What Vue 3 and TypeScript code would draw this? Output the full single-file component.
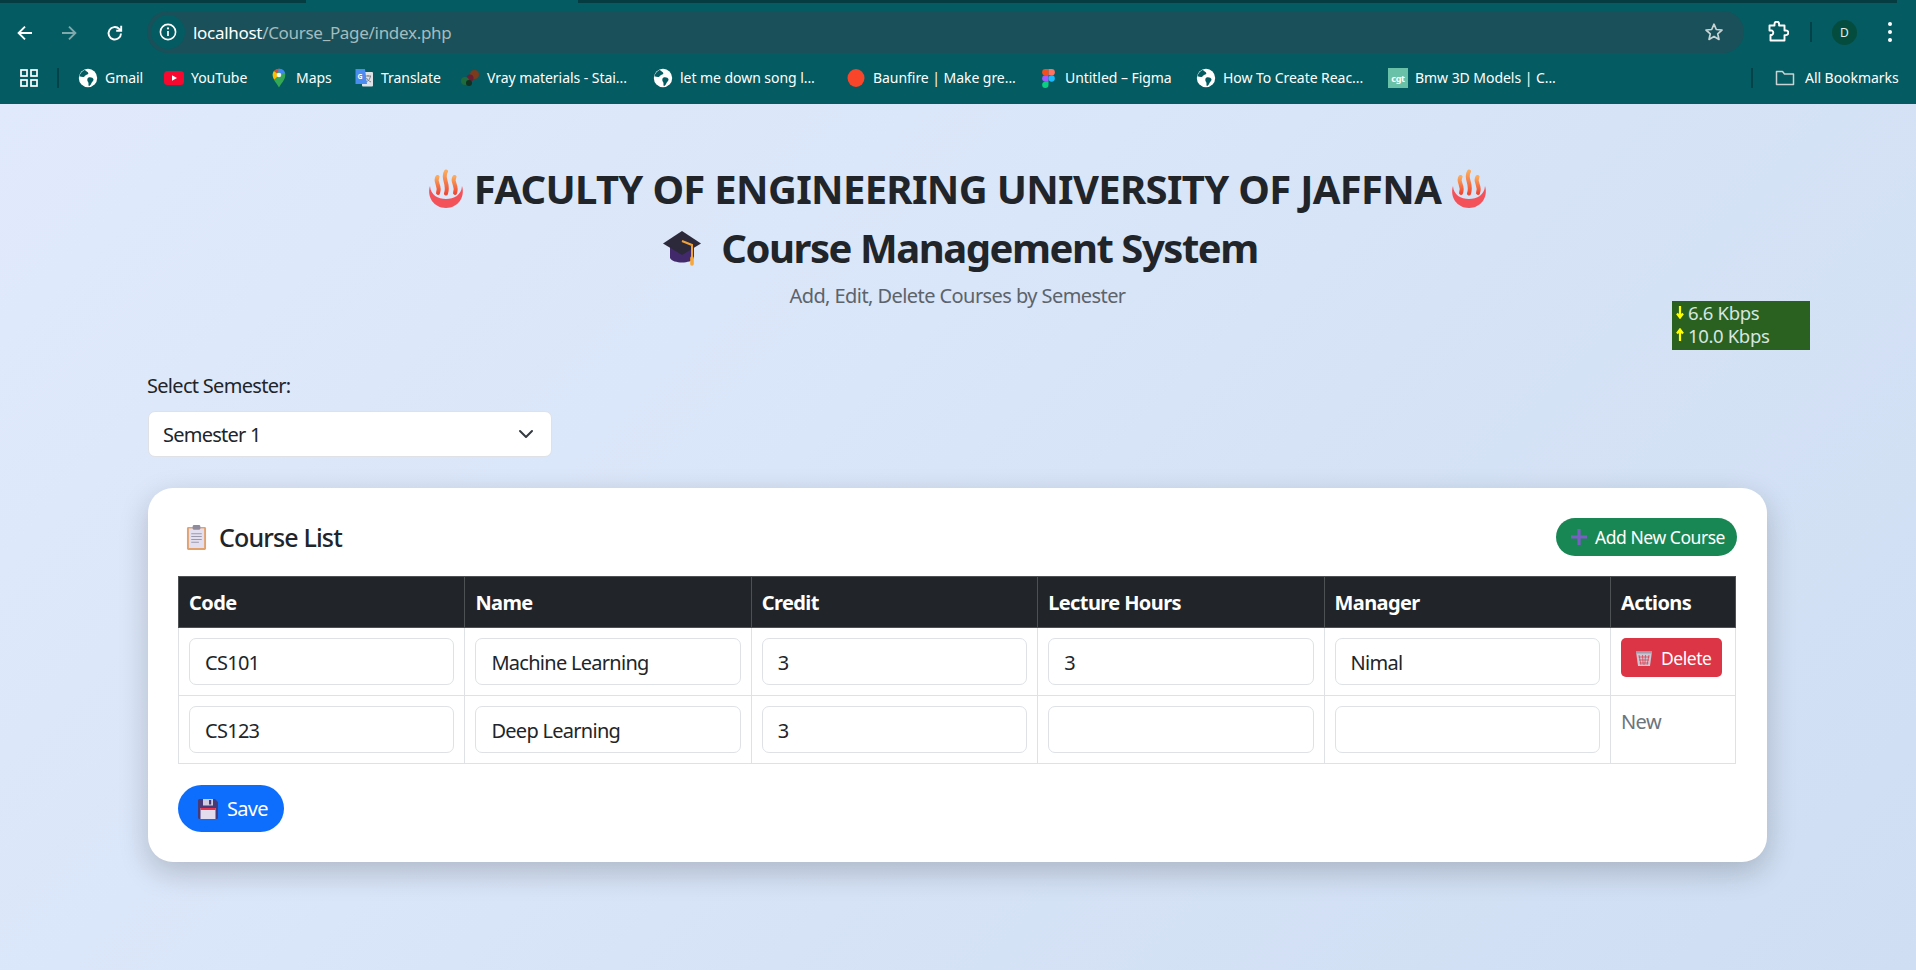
<script setup lang="ts">
import { ref } from 'vue'

interface Mark { label: string; kind: string; width: number }

const bookmarks: Mark[] = [
  { label: 'Gmail', kind: 'globe', width: 86 },
  { label: 'YouTube', kind: 'yt', width: 105 },
  { label: 'Maps', kind: 'maps', width: 85 },
  { label: 'Translate', kind: 'translate', width: 106 },
  { label: 'Vray materials - Stai...', kind: 'vray', width: 193 },
  { label: 'let me down song l...', kind: 'globe', width: 193 },
  { label: 'Baunfire | Make gre...', kind: 'baun', width: 192 },
  { label: 'Untitled – Figma', kind: 'figma', width: 158 },
  { label: 'How To Create Reac...', kind: 'globe', width: 192 },
  { label: 'Bmw 3D Models | C...', kind: 'cgt', width: 168 }
]

const semester = ref('Semester 1')
const columns = ['Code', 'Name', 'Credit', 'Lecture Hours', 'Manager', 'Actions']
const rows = ref([
  { code: 'CS101', name: 'Machine Learning', credit: '3', hours: '3', manager: 'Nimal', isNew: false },
  { code: 'CS123', name: 'Deep Learning', credit: '3', hours: '', manager: '', isNew: true }
])
</script>

<template>
  <div class="window">
    <header class="chrome">
      <div class="tabstrip">
        <span class="strip left"></span>
        <span class="strip right"></span>
      </div>
      <div class="toolbar">
        <svg class="nav" viewBox="0 0 20 20" width="20" height="20"><path d="M17 10H4M10 3.6 3.6 10l6.4 6.4" fill="none" stroke="#fff" stroke-width="1.9"/></svg>
        <svg class="nav dim" viewBox="0 0 20 20" width="20" height="20"><path d="M3 10h13M10 3.6l6.4 6.4-6.4 6.4" fill="none" stroke="#7fa9ac" stroke-width="1.9"/></svg>
        <svg class="nav" viewBox="0 0 20 20" width="20" height="20"><path d="M16 10.5a6.2 6.2 0 1 1-1.8-4.6L16 7.6M16.2 2.8v5h-5" fill="none" stroke="#fff" stroke-width="1.9"/></svg>
        <div class="omnibox">
          <span class="info">
            <svg viewBox="0 0 20 20" width="20" height="20"><circle cx="10" cy="10" r="7.6" fill="none" stroke="#fff" stroke-width="1.6"/><path d="M10 9v5" stroke="#fff" stroke-width="1.7"/><circle cx="10" cy="6.4" r="1.1" fill="#fff"/></svg>
          </span>
          <span class="url"><b>localhost</b>/Course_Page/index.php</span>
          <svg class="star" viewBox="0 0 20 20" width="20" height="20"><path d="m10 2.2 2.3 5.3 5.7.5-4.3 3.8 1.3 5.6-5-3-5 3 1.3-5.6L2 8l5.7-.5z" fill="none" stroke="#c7d3d4" stroke-width="1.7" stroke-linejoin="round"/></svg>
        </div>
        <svg class="ext" viewBox="0 0 22 22" width="22" height="22"><path d="M2.5 4.5h5V3a2.3 2.3 0 0 1 4.6 0v1.500h5.400v5H19a2.300 2.300 0 0 1 0 4.600h-1.500v5.400H3.500v-5.500H5a2.600 2.600 0 0 0 0-4.500H2.500z" fill="none" stroke="#fff" stroke-width="1.9" stroke-linejoin="round"/></svg>
        <span class="vsep tall"></span>
        <span class="avatar">D</span>
        <span class="kebab"><i></i><i></i><i></i></span>
      </div>
      <div class="bookmarks">
        <svg class="apps" viewBox="0 0 18 18" width="18" height="18"><g fill="none" stroke="#fff" stroke-width="1.7"><rect x="1" y="1" width="6" height="6"/><rect x="11" y="1" width="6" height="6"/><rect x="1" y="11" width="6" height="6"/><rect x="11" y="11" width="6" height="6"/></g></svg>
        <span class="vsep first"></span>
        <div v-for="b in bookmarks" :key="b.label" class="mark" :style="{ width: b.width + 'px' }">
          <span class="fav">
            <svg v-if="b.kind === 'globe'" viewBox="0 0 20 20" width="20" height="20"><circle cx="10" cy="10" r="9.200" fill="#fff"/><path d="M7 1.800c1 2 3.500 2 3.300 3.700-.2 1.500-3 1.200-3.600 2.800-.4 1.200-3.500.6-5.200 0C2 5.500 4 3 7 1.800zM10.500 9.600c2-.7 4.700.2 5 1.700.3 1.600-1.400 2.200-2 3.600-.5 1.300-1.500 3-2.700 3.200-.8-1.500.3-3-.9-4.300-.9-1-.9-3.500.6-4.200z" fill="#045c62"/></svg>
            <svg v-else-if="b.kind === 'yt'" viewBox="0 0 20 20" width="20" height="20"><rect x="0" y="3" width="20" height="14" rx="3.500" fill="#f7082f"/><path d="m8 7.200 5 2.800-5 2.800z" fill="#fff"/></svg>
            <svg v-else-if="b.kind === 'maps'" viewBox="0 0 20 20" width="20" height="20"><path d="M10 19.500C8 15.500 3.700 12 3.700 7a6.300 6.300 0 0 1 12.600 0c0 5-4.300 8.500-6.300 12.500z" fill="#34a853"/><path d="M5 3 10 7 5.400 11.500C4.500 10.200 3.700 8.700 3.700 7 3.700 5.200 4.200 4 5 3z" fill="#fbbc04"/><path d="M5 3a6.300 6.300 0 0 1 5-2.300l1 1.800L8 5z" fill="#ea4335"/><path d="M10 .7A6.300 6.300 0 0 1 16 4.500L12 7 9 3z" fill="#4285f4"/><circle cx="10" cy="7" r="2.300" fill="#fff" opacity=".9"/></svg>
            <svg v-else-if="b.kind === 'translate'" viewBox="0 0 20 20" width="20" height="20"><rect x="8" y="4" width="11" height="14.500" rx="1" fill="#dfe3e8"/><path d="M11 8h6M14 7v1.500M12 14c2.500-1 4-3 4.500-6M12.500 10c1 2 2.500 3 4.500 4" fill="none" stroke="#7a8087" stroke-width="1"/><path d="M1.500 1h9.500l2 15H1.500z" fill="#4a8cf0"/><text x="3.500" y="10.500" class="gt">G</text></svg>
            <svg v-else-if="b.kind === 'vray'" viewBox="0 0 20 20" width="20" height="20"><circle cx="14.500" cy="6.500" r="4.500" fill="#7b3b1c"/><circle cx="10" cy="10" r="3.500" fill="#6a1d33"/><circle cx="5" cy="13" r="4" fill="#1f6b3e"/><circle cx="9" cy="15" r="3" fill="#12301f"/></svg>
            <svg v-else-if="b.kind === 'baun'" viewBox="0 0 20 20" width="20" height="20"><ellipse cx="10" cy="10" rx="8.500" ry="9" fill="#f9452a"/></svg>
            <svg v-else-if="b.kind === 'figma'" viewBox="0 0 12 18" width="13" height="19"><path d="M6 0H3a3 3 0 0 0 0 6h3z" fill="#f24e1e"/><path d="M6 0h3a3 3 0 0 1 0 6H6z" fill="#ff7262"/><path d="M6 6H3a3 3 0 0 0 0 6h3z" fill="#a259ff"/><circle cx="9" cy="9" r="3" fill="#1abcfe"/><path d="M6 12H3a3 3 0 1 0 3 3z" fill="#0acf83"/></svg>
            <span v-else class="cgt">cgt</span>
          </span>
          <span class="mark-label">{{ b.label }}</span>
        </div>
        <span class="vsep end"></span>
        <svg class="folder" viewBox="0 0 20 18" width="20" height="18"><path d="M1.500 15.500V2.500h6l2 2.500h9v10.500z" fill="none" stroke="#c7d3d4" stroke-width="1.500" stroke-linejoin="round"/></svg>
        <span class="all">All Bookmarks</span>
      </div>
    </header>

    <main class="page">
      <div class="speed">
        <div class="speed-row">
          <svg viewBox="0 0 8 14" width="8" height="14"><path d="M4 1v11M1 8.500 4 12.500 7 8.500" fill="none" stroke="#ffff00" stroke-width="2.200"/></svg>
          <span>6.6 Kbps</span>
        </div>
        <div class="speed-row">
          <svg viewBox="0 0 8 14" width="8" height="14"><path d="M4 13V2M1 5.500 4 1.500 7 5.500" fill="none" stroke="#ffff00" stroke-width="2.200"/></svg>
          <span>10.0 Kbps</span>
        </div>
      </div>

      <h1 class="title">
        <span class="line">
          <svg class="spring" viewBox="0 0 40 40" width="40" height="40"><defs><linearGradient id="fl" x1="0" y1="0" x2="0" y2="1"><stop offset="0" stop-color="#fba95a"/><stop offset="1" stop-color="#ef4a35"/></linearGradient></defs><path d="M4 17C.5 28 8 39 20 39s19.500-11 16-22c-.5 9-8 13-16 13S4.500 26 4 17z" fill="#f4525a"/><g fill="none" stroke="url(#fl)" stroke-width="4" stroke-linecap="round"><path d="M11.500 8c-3.500 5 3.500 8 .5 16"/><path d="M20 2.500c-4.500 7 3.500 12 0 22"/><path d="M28.500 8c-3.500 5 3.500 8 .5 16"/></g></svg>
          <span>FACULTY OF ENGINEERING UNIVERSITY OF JAFFNA</span>
          <svg class="spring" viewBox="0 0 40 40" width="40" height="40"><path d="M4 17C.5 28 8 39 20 39s19.500-11 16-22c-.5 9-8 13-16 13S4.500 26 4 17z" fill="#f4525a"/><g fill="none" stroke="url(#fl)" stroke-width="4" stroke-linecap="round"><path d="M11.500 8c-3.500 5 3.500 8 .5 16"/><path d="M20 2.500c-4.500 7 3.500 12 0 22"/><path d="M28.500 8c-3.500 5 3.500 8 .5 16"/></g></svg>
        </span>
        <span class="line second">
          <svg class="cap" viewBox="0 0 40 36" width="40" height="36"><path d="M8 14v14c3 6 21 6 24 0V14z" fill="#42296b"/><path d="M20 1 39 13.500 20 25 1 13.500z" fill="#2c2a3a"/><path d="M20 11 30 15v14" fill="none" stroke="#f0a23a" stroke-width="2"/><path d="M30 28v6" stroke="#f6a83c" stroke-width="3.600" stroke-linecap="round"/></svg>
          <span class="cap-text">Course Management System</span>
        </span>
      </h1>
      <p class="subtitle">Add, Edit, Delete Courses by Semester</p>

      <label class="field-label" for="semester">Select Semester:</label>
      <div class="select-wrap">
        <select id="semester" v-model="semester" class="select">
          <option>Semester 1</option>
          <option>Semester 2</option>
        </select>
        <svg class="chevron" viewBox="0 0 16 16" width="16" height="16"><path d="m2 5 6 6 6-6" fill="none" stroke="#343a40" stroke-width="2" stroke-linecap="round" stroke-linejoin="round"/></svg>
      </div>

      <section class="card">
        <div class="card-head">
          <h2 class="card-title">
            <svg viewBox="0 0 22 26" width="21" height="25"><rect x="1" y="2" width="20" height="24" rx="1.500" fill="#e2a06c"/><rect x="3" y="3.500" width="16" height="20.500" fill="#e4dff0"/><rect x="7" y="0" width="8" height="5" rx="1.500" fill="#8f8a9c"/><path d="M5.500 9h11M5.500 12h11M5.500 15h11M5.500 18h8" stroke="#9c98ac" stroke-width="1.100"/></svg>
            <span>Course List</span>
          </h2>
          <button class="pill success" type="button">
            <svg viewBox="0 0 18 18" width="18" height="18"><path d="M9 1v16M1 9h16" stroke="#7a5ec6" stroke-width="3.200"/></svg>
            Add New Course
          </button>
        </div>

        <table class="grid">
          <thead>
            <tr><th v-for="c in columns" :key="c">{{ c }}</th></tr>
          </thead>
          <tbody>
            <tr v-for="r in rows" :key="r.code">
              <td><input v-model="r.code" class="cell-input" type="text" /></td>
              <td><input v-model="r.name" class="cell-input" type="text" /></td>
              <td><input v-model="r.credit" class="cell-input" type="text" /></td>
              <td><input v-model="r.hours" class="cell-input" type="text" /></td>
              <td><input v-model="r.manager" class="cell-input" type="text" /></td>
              <td>
                <span v-if="r.isNew" class="new-tag">New</span>
                <button v-else class="delete" type="button">
                  <svg viewBox="0 0 18 18" width="18" height="18"><path d="M1 2.500h16L15 17H3z" fill="#cfc6d4"/><path d="M1 2.500h16v2H1z" fill="#a59cac"/><path d="M4 6l2 10M7.500 6l.7 10M10.500 6l-.7 10M14 6l-2 10M3.500 8h11M4 11h10M4.500 14h9" stroke="#dc3545" stroke-width=".7" fill="none"/></svg>
                  Delete
                </button>
              </td>
            </tr>
          </tbody>
        </table>

        <button class="pill primary save" type="button">
          <svg viewBox="0 0 20 20" width="20" height="20"><path d="M0 1.500A1.500 1.500 0 0 1 1.500 0H17l3 3v15.500a1.500 1.500 0 0 1-1.500 1.500h-17A1.500 1.500 0 0 1 0 18.500z" fill="#463a78"/><rect x="5" y="0" width="10" height="6.500" fill="#cfcbe0"/><rect x="11" y="1" width="2.200" height="4.500" fill="#463a78"/><rect x="2.500" y="9" width="15" height="11" fill="#e3dcec"/><rect x="2.500" y="9" width="15" height="2" fill="#e8344f"/></svg>
          Save
        </button>
      </section>
    </main>
  </div>
</template>

<style>
html, body { margin: 0; padding: 0; }
</style>

<style scoped>
.window {
  min-height: 100vh;
  display: flex;
  flex-direction: column;
  font-family: "Noto Sans", "Open Sans", sans-serif;
  color: #212529;
}
.chrome { background: #045b61; height: 104px; flex: none; color: #fff; }
.tabstrip { height: 3px; position: relative; }
.strip { position: absolute; top: 0; height: 3px; background: #043c42; }
.strip.left { left: 0; width: 306px; }
.strip.right { left: 578px; right: 19px; }
.toolbar { display: flex; align-items: center; height: 60px; box-sizing: border-box; }
.nav { margin-left: 15px; margin-right: 9px; flex: none; }
.nav + .nav + .nav { margin-left: 17px; margin-right: 0; }
.omnibox {
  width: 1597px;
  height: 42px;
  margin-left: 22px;
  border-radius: 21px;
  background: #1a5059;
  display: flex;
  align-items: center;
  flex: none;
  margin-top: -2px;
}
.info {
  width: 34px; height: 34px; margin-left: 4px; border-radius: 50%;
  background: #045b61; display: flex; align-items: center; justify-content: center; flex: none;
}
.url { margin-left: 8px; font-size: 17px; color: #a5bcbf; letter-spacing: -0.3px; white-space: nowrap; }
.url b { font-weight: 400; color: #fff; }
.star { margin-left: auto; margin-right: 20px; }
.ext { margin-left: 23px; margin-top: -2px; flex: none; }
.vsep { display: block; width: 2px; background: #04424a; flex: none; }
.vsep.tall { height: 20px; margin-left: 21px; margin-top: -2px; }
.avatar {
  width: 25px; height: 25px; border-radius: 50%; background: #044d3e; color: #e2efec;
  font-size: 12px; display: flex; align-items: center; justify-content: center;
  margin-left: 20px; margin-top: -2px; flex: none;
}
.kebab { display: flex; flex-direction: column; gap: 4px; margin-left: 31px; margin-top: -2px; }
.kebab i { display: block; width: 4px; height: 4px; border-radius: 50%; background: #fff; }
.bookmarks { display: flex; align-items: center; height: 30px; padding-right: 17px; font-size: 14px; white-space: nowrap; }
.apps { margin-left: 20px; flex: none; }
.vsep.first { height: 20px; margin-left: 19px; margin-right: 19px; }
.mark { display: flex; align-items: center; flex: none; }
.fav { width: 20px; height: 20px; margin-right: 7px; display: flex; align-items: center; justify-content: center; flex: none; }
.mark-label { letter-spacing: -0.05px; margin-top: -2px; }
.gt { font-size: 7px; fill: #fff; font-weight: 700; font-family: "Noto Sans", sans-serif; }
.cgt {
  width: 20px; height: 20px; background: #69c2a8; color: #fff; font-size: 9px; font-weight: 700;
  display: flex; align-items: center; justify-content: center; letter-spacing: -0.3px;
}
.vsep.end { height: 20px; margin-left: auto; }
.folder { margin-left: 22px; flex: none; }
.all { margin-left: 10px; width: 94px; letter-spacing: -0.05px; margin-top: -2px; }

.page {
  flex: 1;
  position: relative;
  box-sizing: border-box;
  padding: 55px 149px 60px 148px;
  background: linear-gradient(135deg, #e0eafc, #cfdef3);
}
.speed {
  position: absolute;
  left: 1672px;
  top: 197px;
  width: 138px;
  height: 49px;
  box-sizing: border-box;
  padding: 0 4px 4px;
  background: #2a6120;
  color: #d7e6e0;
  font-size: 18.500px;
  line-height: 23px;
  letter-spacing: -0.35px;
  display: flex;
  flex-direction: column;
  justify-content: center;
}
.speed-row { display: flex; align-items: center; gap: 4px; }

.title { margin: 0; text-align: center; font-size: 40px; line-height: 59px; font-weight: 700; color: #212529; }
.line { display: flex; align-items: center; justify-content: center; gap: 8px; letter-spacing: -0.68px; }
.second { padding-left: 5px; }
.spring { flex: none; }
.cap { flex: none; }
.cap-text { margin-left: 11px; letter-spacing: -1.46px; }
.subtitle { margin: 4px 0 0; text-align: center; font-size: 20px; line-height: 30px; color: #5c636a; letter-spacing: -0.57px; }
.field-label { display: block; margin-top: 60px; margin-left: -1px; font-size: 20px; line-height: 30px; letter-spacing: -0.7px; }
.select-wrap { position: relative; width: 404px; margin-top: 10px; }
.select {
  display: block; width: 100%; height: 46px; box-sizing: border-box;
  appearance: none; border: 1px solid #dee2e6; border-radius: 7px; background: #fff;
  padding: 0 14px; font: inherit; font-size: 20px; color: #212529; letter-spacing: -0.75px;
}
.chevron { position: absolute; right: 18px; top: 15px; pointer-events: none; }

.card {
  margin-top: 31px;
  box-sizing: border-box;
  padding: 30px;
  background: #fff;
  border-radius: 25px;
  box-shadow: 0 10px 30px rgba(0, 0, 0, .2);
}
.card-head { display: flex; justify-content: space-between; align-items: center; height: 38px; margin-bottom: 20px; }
.card-title { margin: 0; display: flex; align-items: center; gap: 12px; padding-left: 8px; font-size: 25px; font-weight: 500; letter-spacing: -0.85px; }
.pill {
  border: 0; color: #fff; font-family: inherit; display: inline-flex; align-items: center;
  border-radius: 24px; cursor: pointer; box-sizing: border-box;
}
.success { background: #198754; height: 38px; width: 181px; padding: 0 0 0 14px; gap: 7px; font-size: 17.500px; letter-spacing: -0.45px; }
.primary { background: #0d6efd; }
.save { height: 47px; width: 106px; margin-top: 21px; padding: 0 0 0 20px; gap: 9px; font-size: 20px; letter-spacing: -0.7px; }
.grid { width: 1558px; border-collapse: collapse; table-layout: fixed; font-size: 20px; }
.grid th {
  height: 51px; box-sizing: border-box; text-align: left; padding: 0 10px; background: #212529; color: #fff;
  border: 1px solid #4d5154; font-weight: 700; letter-spacing: -0.6px;
}
.grid th:last-child, .grid td:last-child { width: 125px; }
.grid td { height: 68px; box-sizing: border-box; padding: 10px; border: 1px solid #dee2e6; vertical-align: top; }
.cell-input {
  display: block; width: 100%; height: 47px; box-sizing: border-box; border: 1px solid #dee2e6; border-radius: 7px;
  padding: 2px 15px 0; background: #fff; font: inherit; color: #212529; letter-spacing: -0.72px; outline: 0;
}
.new-tag { display: block; line-height: 30px; margin-top: 1px; font-size: 20px; color: #6c757d; letter-spacing: -0.6px; }
.delete {
  width: 101px; height: 39px; border: 0; border-radius: 5px; background: #dc3545; color: #fff;
  font-family: inherit; font-size: 17.500px; letter-spacing: -0.45px; display: flex; align-items: center;
  padding: 0 0 0 14px; gap: 8px; box-sizing: border-box; cursor: pointer;
}
</style>
